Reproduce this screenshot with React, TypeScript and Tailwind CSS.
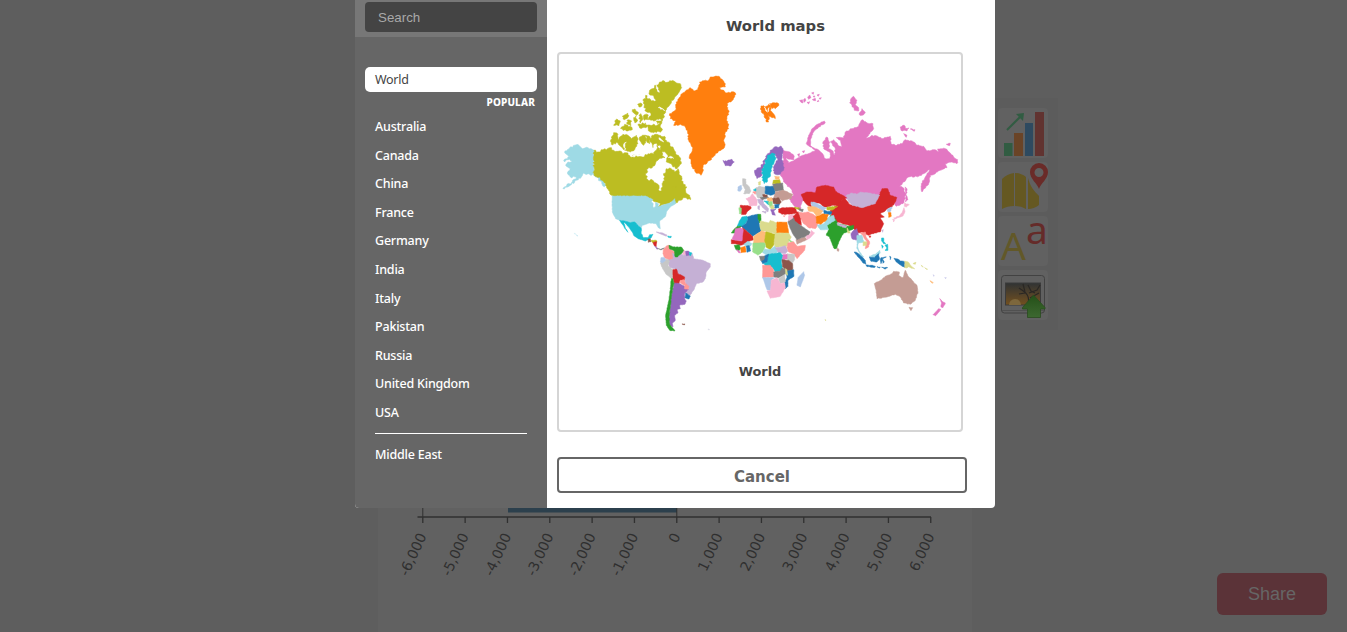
import React from "react";

type Shape = [color: string, points: string];

/** Adds small, repeatable coastline detail to a coarse outline. */
function coast(points: string, amount = 3): string {
  const p = points.trim().split(/\s+/).map((s) => s.split(",").map(Number));
  let seed = p.length * 97 + p[0][0];
  const rnd = () => {
    seed = (seed * 9301 + 49297) % 233280;
    return seed / 233280 - 0.5;
  };
  const out: string[] = [];
  p.forEach(([x, y], i) => {
    const [nx, ny] = p[(i + 1) % p.length];
    const d = Math.hypot(nx - x, ny - y) || 1;
    const steps = Math.max(1, Math.floor(d / 4));
    out.push(`${x},${y}`);
    for (let k = 1; k < steps; k++) {
      const t = k / steps;
      const o = rnd() * amount * 2;
      out.push(`${(x + (nx - x) * t - ((ny - y) / d) * o).toFixed(1)},${(y + (ny - y) * t + ((nx - x) / d) * o).toFixed(1)}`);
    }
  });
  return out.join(" ");
}

function Region({ x, y, shapes, rough = 0.8 }: { x: number; y: number; shapes: Shape[]; rough?: number }) {
  return (
    <g transform={`translate(${x} ${y}) scale(0.33333)`}>
      {shapes.map(([c, p], i) => (
        <polygon key={i} fill={c} stroke={c} strokeWidth="1.6" points={coast(p, rough)} />
      ))}
    </g>
  );
}

const O = "#bcbd22";
const northAmerica: Shape[] = [
  ["#9edae5", "25,277 40,262 60,253 75,262 95,262 113,270 113,345 100,342 82,338 75,350 55,365 20,385 48,364 60,350 42,350 33,338 42,325 28,315 35,305 48,302 40,297 25,305 22,300 40,290"],
  ["#9edae5", "113,342 130,348 140,362 149,375 144,379 132,362 118,350"],
  [O, "113,270 125,275 135,268 150,268 160,262 172,270 190,272 200,280 215,278 222,290 240,285 262,290 275,280 292,282 300,270 302,255 309,270 325,264 315,285 305,300 290,318 275,325 268,345 275,358 292,362 305,372 310,392 316,392 318,375 325,360 322,345 330,325 345,325 355,335 365,325 372,345 380,368 392,380 388,392 400,405 403,418 385,412 370,420 355,430 352,422 340,428 325,432 305,440 312,428 300,425 282,415 268,410 172,410 160,400 148,375 130,350 113,345"],
  [O, "285,228 300,222 325,228 332,245 350,260 358,275 372,292 375,305 362,325 350,320 345,310 330,305 335,285 318,270 310,255 295,250 290,262 282,245"],
  [O, "165,230 172,217 185,222 185,238 200,222 215,225 225,235 240,225 245,250 235,268 222,275 205,270 195,260 185,248 165,252"],
  [O, "250,230 268,225 270,240 262,255 254,245"],
  [O, "268,225 282,232 280,250 272,246"],
  [O, "296,272 306,280 314,276 318,286 326,292 316,294 300,288"],
  [O, "280,90 300,75 315,65 345,62 372,70 376,82 365,100 350,120 335,140 325,160 318,180 302,176 292,182 276,178 284,160 270,154 260,128 268,105 285,122 300,120 290,105 278,100"],
  [O, "172,195 182,176 192,182 188,196"],
  [O, "193,205 205,192 222,198 228,208 210,212"],
  [O, "198,168 214,158 218,166 205,178"],
  [O, "212,180 226,182 224,196 214,192"],
  [O, "232,172 240,165 242,184 236,188"],
  [O, "248,165 254,160 260,176 252,188"],
  [O, "245,192 268,188 272,200 250,203"],
  [O, "272,195 314,192 316,212 284,216 276,206"],
  [O, "228,148 236,146 246,156 240,164 232,158"],
  [O, "244,132 254,128 256,138 248,140"],
  [O, "262,165 276,164 274,178 264,180"],
  [O, "300,182 320,178 316,190 304,190"],
  [O, "350,378 362,380 360,388 350,386"],
  ["#fff", "300,75 303,88 309,96 305,88"],
  ["#fff", "325,152 310,140 306,142"],
  ["#fff", "205,270 202,252 210,246 206,256"],
  ["#fff", "225,288 245,280 262,284 244,288"],
  ["#fff", "322,245 312,240 308,232 316,238"],
  ["#fff", "352,294 342,288 336,292 344,294"],
];
const arctic: Shape[] = [
  ["#ff7f0e", "28,160 45,150 48,125 65,100 90,82 100,92 112,88 118,65 145,60 150,50 175,48 190,62 195,80 178,82 200,98 210,98 222,95 227,102 212,125 200,130 205,150 200,175 205,205 195,215 192,235 192,262 165,280 150,300 132,312 122,345 105,335 92,310 88,285 98,262 85,240 82,215 75,200 60,192 40,195 48,182 30,175"],
  ["#9467bd", "188,300 200,303 215,297 222,305 212,317 195,316"],
  ["#ff7f0e", "302,137 318,138 325,132 335,135 330,150 343,165 345,175 335,172 325,165 325,185 318,185 312,165 303,155"],
  ["#ff7f0e", "328,130 350,127 356,135 345,145 332,140"],
  ["#fff", "312,140 319,154 320,150"],
  ["#fff", "326,142 322,156 325,152"],
  ["#9467bd", "283,330 300,322 312,300 322,280 340,262 362,257 368,270 365,290 370,330 360,342 345,342 338,330 345,310 352,300 345,280 330,285 318,300 308,325 305,345 290,355 285,345"],
  ["#17becf", "306,325 315,305 322,285 335,278 345,282 345,298 335,315 330,340 322,362 312,370 306,360"],
];
const P = "#e377c2";
const russia: Shape[] = [
  [P, "-25,208 0,216 12,228 10,239 -8,236 -15,228 -5,247 10,242 30,228 45,222 60,218 75,212 65,202 80,206 95,218 105,235 118,235 120,218 100,205 98,185 110,170 118,185 115,205 125,210 134,225 134,202 120,185 130,178 143,195 155,200 150,180 138,172 160,172 165,155 185,145 205,138 215,118 230,128 248,130 250,145 235,163 228,174 245,165 262,168 275,175 300,168 302,190 315,195 335,190 345,178 370,185 380,195 400,198 410,212 430,208 445,215 442,206 465,205 480,218 490,230 502,238 500,250 485,245 465,250 470,262 450,270 435,280 420,285 415,310 395,335 393,310 405,290 418,268 400,280 385,288 355,290 328,318 342,325 345,355 338,370 318,378 300,352 260,360 170,355 90,340 35,352 45,357 35,365 30,387 10,375 -2,358 10,345 5,330 -20,305 -30,280 -33,265 -20,240"],
  [P, "48,190 55,165 65,145 85,130 102,122 105,128 85,140 70,155 62,175 60,195 68,202 60,200"],
  [P, "182,55 190,48 200,60 195,72 205,82 205,92 192,90 185,75 178,68"],
  [P, "210,95 215,85 225,98 215,105 207,103"],
  [P, "330,140 342,135 345,144 356,143 350,152 332,150"],
  [P, "360,146 374,148 372,153"],
  [P, "340,160 350,165 348,171"],
  [P, "468,192 480,189 478,196"],
  [P, "344,320 350,325 348,345 353,358 346,365"],
  [P, "28,60 36,58 38,68 32,66"],
  [P, "40,58 44,54 46,62 41,66"],
  [P, "52,50 58,44 62,52 55,57"],
  [P, "64,38 70,36 69,42"],
  [P, "66,58 75,54 76,61"],
  [P, "80,64 84,60 86,63"],
  [P, "80,44 87,42 84,48"],
  [P, "86,54 93,52 90,57"],
  [P, "50,66 58,64 55,71"],
  [P, "68,48 74,47 72,51"],
  [P, "22,222 28,220 27,230"],
  [P, "36,213 43,211 40,218"],
];
const southAmerica: Shape[] = [
  ["#9edae5", "168,47 268,47 290,58 285,64 291,70 290,82 297,80 298,66 306,70 305,80 318,75 330,71 345,66 355,55 358,70 342,80 332,92 328,108 310,122 312,145 306,142 300,130 280,128 258,135 255,145 245,135 235,125 222,127 205,122 190,120 178,115 168,95 167,65"],
  ["#17becf", "190,120 205,122 222,127 235,125 245,135 255,145 255,160 262,172 275,172 280,163 290,162 285,172 277,178 268,182 245,175 232,165 228,155 215,138 203,126 207,142 215,156 205,144 198,132"],
  ["#8c564b", "275,177 282,175 284,184 276,186"],
  [O, "284,181 300,180 302,185 290,188"],
  ["#d62728", "290,187 301,184 300,199 294,196"],
  ["#9467bd", "295,197 305,205 302,207"],
  ["#7f7f7f", "303,204 313,207 325,203 314,209"],
  ["#c5b0d5", "300,155 315,157 332,164 330,168 315,162"],
  ["#17becf", "334,167 345,168 344,172 336,171"],
  ["#ff9896", "322,207 330,197 338,195 340,205 355,215 352,235 340,240 325,232 320,220"],
  ["#f7b6d2", "380,207 388,213 388,228 378,222"],
  ["#c5b0d5", "335,240 352,235 348,218 362,228 375,220 380,225 400,226 408,220 412,235 440,240 462,250 462,260 450,275 447,295 440,305 420,310 412,330 400,347 388,338 398,325 388,310 385,290 365,280 355,265 340,262"],
  ["#2ca02c", "338,195 350,200 375,200 382,210 375,220 366,226 364,230 357,230 355,225 354,212 340,206"],
  ["#9467bd", "388,213 398,213 400,225 390,226"],
  ["#17becf", "399,215 407,218 403,226 399,224"],
  ["#c7c7c7", "312,248 322,240 332,236 340,242 335,255 345,265 350,268 350,290 345,295 328,280 318,262"],
  ["#aec7e8", "314,232 325,232 328,240 318,248 312,244"],
  ["#d62728", "350,268 360,266 365,280 385,290 384,300 372,300 368,310 355,312 350,295"],
  ["#9467bd", "355,308 370,310 385,318 387,326 397,326 385,340 385,355 390,362 386,372 370,374 372,385 362,388 365,398 355,405 357,420 348,430 350,440 340,435 338,415 342,380 345,345 350,325"],
  ["#ff9896", "372,300 384,298 388,310 398,318 396,327 384,325 385,315 372,308"],
  ["#1f77b4", "388,338 402,347 398,356 386,352"],
  ["#2ca02c", "345,295 350,295 353,310 348,330 345,350 342,380 338,410 340,432 350,444 356,452 340,450 330,435 328,405 334,375 340,345 343,320"],
  ["#8c564b", "377,431 386,431 384,434"],
  ["#c7e9f1", "54,159 58,161 56,162"],
  ["#c7e9f1", "60,163 65,167 62,167"],
  ["#d9d9e6", "455,446 460,448 457,449"],
];
const europe: Shape[] = [
  ["#d62728", "45,195 75,197 78,203 65,215 62,222 48,222"],
  ["#98df8a", "41,202 48,203 48,220 42,220"],
  ["#f7b6d2", "62,175 75,170 82,160 95,178 95,195 72,197 70,185"],
  ["#c7c7c7", "52,115 62,117 62,130 72,140 77,152 72,160 55,160 60,148 52,135"],
  ["#aec7e8", "38,140 48,135 50,145 45,153 38,152"],
  ["#c7c7c7", "92,142 104,138 120,142 120,160 110,172 98,173 92,160"],
  ["#17becf", "84,149 92,145 91,154"],
  ["#ff9896", "82,155 92,154 90,162"],
  ["#dbdb8d", "99,126 106,123 105,134 100,134"],
  ["#1f77b4", "120,138 148,138 150,160 135,165 120,160"],
  ["#bcbd22", "144,120 163,118 166,132 142,130"],
  ["#ffbb78", "148,108 162,109 162,118 150,116"],
  ["#7f7f7f", "142,132 172,128 175,150 150,153"],
  ["#c49c94", "150,155 175,150 202,162 198,175 180,178 172,182 160,172 145,172"],
  ["#8c564b", "140,175 160,172 168,185 160,193 145,190"],
  ["#1f77b4", "148,193 162,192 160,203 148,203"],
  ["#c5b0d5", "96,178 112,176 115,190 130,205 128,215 118,207 102,190"],
  ["#c5b0d5", "110,214 123,213 121,219"],
  ["#c5b0d5", "98,197 103,196 103,208 98,206"],
  ["#7f7f7f", "104,172 125,166 130,172 112,178"],
  ["#8c564b", "112,163 126,164 124,170 114,169"],
  ["#ffbb78", "125,173 140,172 142,182 128,184"],
  ["#17becf", "116,182 130,184 134,194 126,191"],
  ["#98df8a", "128,186 140,184 142,196 134,200"],
  ["#dbdb8d", "134,200 145,195 147,205 138,208"],
  ["#9467bd", "136,208 152,206 145,212 150,225 142,224"],
  ["#d62728", "160,206 175,202 210,202 216,217 200,221 170,222 160,216"],
  ["#bcbd22", "208,200 222,202 222,208 210,205"],
  ["#7f7f7f", "220,205 234,207 232,214 222,210"],
  ["#ff9896", "174,227 180,226 177,229"],
];
const africa: Shape[] = [
  ["#17becf", "50,50 65,48 68,58 60,70 48,78 36,78 42,62"],
  ["#2ca02c", "36,78 48,78 42,85 28,98 18,98 25,88"],
  ["#1f77b4", "66,50 80,45 98,42 100,60 105,85 108,92 82,108 48,78 62,70 68,58"],
  ["#2ca02c", "98,42 106,42 107,60 103,68 98,55"],
  ["#dbdb8d", "105,62 130,68 135,60 155,68 154,98 150,100 122,92 108,92 104,80"],
  ["#ff7f0e", "155,65 185,66 190,98 154,98"],
  ["#d62728", "52,82 82,108 85,118 65,125 58,132 45,135 30,130 18,130 18,118 50,122"],
  ["#e377c2", "28,98 30,85 46,82 54,88 50,122 30,120 20,117"],
  ["#ffbb78", "85,108 108,92 122,95 120,115 118,128 85,128"],
  [O, "122,94 150,102 148,130 135,148 122,140 118,120"],
  ["#dbdb8d", "150,98 190,98 198,110 190,125 185,138 150,140 146,128"],
  ["#98df8a", "83,128 118,128 120,138 112,155 98,165 82,155"],
  ["#2ca02c", "27,135 42,133 46,145 40,152 32,148"],
  ["#e377c2", "34,148 42,152 46,158 40,157"],
  ["#ff7f0e", "46,142 60,138 62,155 48,157"],
  ["#9edae5", "55,132 68,123 80,130 76,137 62,138"],
  ["#1f77b4", "63,137 72,136 76,152 65,156"],
  ["#9edae5", "118,146 135,148 148,138 158,152 150,160 122,164 112,157"],
  ["#c5b0d5", "150,142 168,140 180,136 188,152 180,160 160,158"],
  ["#98df8a", "190,118 202,124 205,128 194,124"],
  ["#ff9896", "188,128 205,124 215,138 240,135 238,150 215,175 205,160 190,155 185,142"],
  ["#c7c7c7", "185,160 208,162 208,178 200,190 185,175"],
  ["#e377c2", "172,163 185,162 185,176 170,178"],
  ["#17becf", "128,162 165,157 172,165 168,185 172,210 150,215 140,200 125,200 115,190 125,185"],
  ["#1f77b4", "116,168 130,162 125,185 112,190 108,182"],
  ["#7f7f7f", "102,168 118,168 116,178 107,182"],
  ["#8c564b", "170,178 190,180 202,190 202,208 185,212 172,200"],
  ["#ff9896", "112,195 135,195 145,208 145,230 112,232"],
  ["#7f7f7f", "145,215 165,212 170,203 185,208 180,222 160,232 146,230"],
  ["#1f77b4", "183,213 205,208 206,228 188,240 188,258 180,265 178,245 185,232"],
  ["#dbdb8d", "180,205 185,208 187,225 181,220"],
  ["#c7c7c7", "160,235 178,222 180,245 165,250"],
  ["#aec7e8", "112,232 148,232 138,240 136,270 125,268"],
  ["#f7b6d2", "138,240 155,232 165,250 178,248 180,262 165,288 135,294 125,272 136,270"],
  ["#aec7e8", "235,214 238,225 225,260 215,255 218,232"],
  ["#c49c94", "212,118 238,110 245,118 215,132"],
  ["#7f7f7f", "188,65 196,46 205,48 225,75 240,85 255,95 250,105 215,118 205,105 195,85"],
  ["#f7b6d2", "258,90 268,98 255,112 245,118 242,108 255,102"],
  ["#f7b6d2", "190,46 205,42 202,54 190,62"],
  ["#d62728", "204,48 218,34 226,55 228,75 210,62"],
];
const asia: Shape[] = [
  ["#ff9896", "-5,125 8,128 25,125 48,138 52,165 45,175 25,172 10,160 2,145"],
  ["#d62728", "3,72 20,65 45,67 50,50 75,45 100,50 105,62 120,72 140,82 125,90 115,105 95,105 80,110 70,110 60,100 40,95 30,100 35,112 22,105 10,92"],
  ["#d62728", "132,82 140,92 150,103 185,110 220,98 232,85 245,55 262,55 270,75 290,82 285,95 275,110 262,115 250,125 240,130 252,140 240,142 250,160 240,185 215,190 205,195 185,185 170,190 160,175 145,165 110,155 95,140 90,120 112,102"],
  ["#c5b0d5", "138,75 155,68 170,72 180,65 205,68 238,75 233,85 225,100 185,112 155,105 143,92"],
  ["#2ca02c", "90,135 105,145 112,160 145,168 160,165 160,175 150,180 140,185 130,188 120,205 108,235 102,235 92,212 88,200 78,195 85,175 80,165"],
  ["#c5b0d5", "110,158 140,168 135,173 112,165"],
  ["#dbdb8d", "140,172 150,188 142,188"],
  ["#9467bd", "160,180 170,175 175,195 168,210 155,205 152,190"],
  ["#9edae5", "170,195 185,195 190,215 175,217 172,228 178,245 190,260 182,258 170,235"],
  ["#ff9896", "180,188 195,185 197,200 208,215 205,230 195,235 200,215 190,200"],
  ["#dbdb8d", "188,215 200,215 198,226 188,226"],
  ["#9edae5", "85,140 100,135 105,150 80,165 85,178 60,178 50,165 70,160"],
  ["#ff7f0e", "48,138 70,130 85,132 78,150 60,162 48,158"],
  ["#1f77b4", "70,120 95,125 92,132 72,130"],
  [O, "80,110 112,108 95,120 80,118"],
  ["#aec7e8", "32,95 45,97 65,108 78,112 68,122 50,112 35,108"],
  ["#ffbb78", "22,110 35,108 50,112 68,122 62,132 48,138 40,125 25,122"],
  ["#c49c94", "111,233 116,237 115,243 111,242"],
  ["#aec7e8", "260,118 275,110 272,122 264,126"],
  ["#ff7f0e", "264,127 272,127 273,138 265,141"],
  ["#f7b6d2", "313,97 318,101 327,103 318,110 312,108"],
  ["#f7b6d2", "311,112 314,124 308,137 297,141 284,146 280,143 295,138 306,126"],
  ["#f7b6d2", "277,147 283,148 280,155"],
  ["#c5b0d5", "245,180 249,178 247,186"],
  ["#d62728", "206,197 212,197 209,202"],
  ["#17becf", "244,203 250,203 250,214 256,220 250,220 244,212"],
  ["#17becf", "254,224 262,222 263,240 254,240 260,233"],
  ["#17becf", "244,224 249,228 246,234"],
  ["#1f77b4", "162,245 172,248 195,270 197,282 188,278"],
  ["#1f77b4", "197,284 212,285 225,288 224,291 200,289"],
  ["#9edae5", "207,258 225,252 238,240 240,248 225,262"],
  ["#1f77b4", "207,260 222,262 235,250 238,265 230,275 212,273"],
  ["#1f77b4", "242,262 258,260 246,265 252,275 248,279 246,270 242,280 240,270"],
  ["#1f77b4", "230,289 240,291 238,293"],
  ["#1f77b4", "244,291 262,292 255,296"],
  ["#1f77b4", "268,258 272,260 270,268"],
  ["#1f77b4", "281,264 292,266 300,272 313,274 313,291 302,285 288,275"],
  ["#dbdb8d", "313,272 326,277 332,286 343,296 334,294 325,289 320,293 313,292"],
  ["#dbdb8d", "338,280 347,276 345,282"],
  ["#c49c94", "222,340 245,328 255,318 275,310 280,303 297,305 295,315 308,322 315,300 322,315 335,330 350,345 353,365 345,390 330,402 310,398 300,380 285,372 260,380 230,385 228,362"],
  ["#c49c94", "326,411 337,412 332,421"],
  [P, "418,385 425,393 435,398 428,412 422,410 424,398"],
  [P, "398,433 415,415 422,418 405,437"],
  ["#ffbb78", "389,331 399,337 396,339"],
  ["#dbdb8d", "362,285 369,290 366,289"],
  ["#dbdb8d", "373,292 382,297 378,297"],
  ["#c7c7e8", "433,322 438,322 436,325"],
  ["#c7c7e8", "399,313 402,317 400,318"],
  ["#dbdb8d", "74,448 77,449 76,451"],
];

function WorldMap() {
  return (
    <svg className="block h-[290px] w-[402px]" viewBox="559 54 402 290">
      <Region x={556.3} y={60.3} shapes={northAmerica} rough={3.2} />
      <Region x={790.3} y={80.3} shapes={russia} rough={1.8} />
      <Region x={660.3} y={60.3} shapes={arctic} rough={2.8} />
      <Region x={556.3} y={180.3} shapes={southAmerica} />
      <Region x={800.3} y={170.3} shapes={asia} rough={1} />
      <Region x={725.3} y={200.3} shapes={africa} rough={0.5} />
      <Region x={725.3} y={140.3} shapes={europe} />
    </svg>
  );
}

const ticks = ["-6,000", "-5,000", "-4,000", "-3,000", "-2,000", "-1,000", "0", "1,000", "2,000", "3,000", "4,000", "5,000", "6,000"];

function ChartAxis() {
  return (
    <svg className="block h-[134px] w-[594px]" viewBox="378 498 594 134">
      <rect x="508" y="498" width="169" height="14.5" fill="#2c404d" />
      <path d="M422.8 498V517M676.8 498V517" stroke="#303030" strokeWidth="1" />
      <path d="M417.500 517H931" stroke="#303030" strokeWidth="1.7" />
      {ticks.map((label, i) => {
        const x = 422.8 + i * 42.33;
        return (
          <g key={label}>
            <path d={`M${x} 517V523`} stroke="#303030" strokeWidth="1.3" />
            <text
              x={x + 4}
              y="536"
              transform={`rotate(-65 ${x + 4} 536)`}
              textAnchor="end"
              fontSize="14"
              fontFamily="DejaVu Sans, sans-serif"
              fill="#2f2f2f"
            >
              {label}
            </text>
          </g>
        );
      })}
    </svg>
  );
}

function ChartIcon() {
  return (
    <svg className="size-[50px]" viewBox="0 0 50 50">
      <path d="M6 35h8.500v13H6z" fill="#315c42" />
      <path d="M16 25h9v23h-9z" fill="#6a4427" />
      <path d="M27 15h8v33h-8z" fill="#2e4a60" />
      <path d="M37 4h9v44h-9z" fill="#613330" />
      <path d="M9 22 23 8" stroke="#315c42" strokeWidth="2" />
      <path d="m18 6 8-1-1 8z" fill="#315c42" />
    </svg>
  );
}

function MapIcon() {
  return (
    <svg className="size-[50px]" viewBox="0 0 50 50">
      <path d="M4 17q5-5 12-6v33q-7 0-12 3zM17 11q6 0 11 4v32q-5-3-11-3zM30 16c2 8 6 13 11 18v9q-5 4-11 4z" fill="#655822" />
      <path fillRule="evenodd" d="M41 27c-2-6-9-10-9-17a9 9 0 0 1 18 0c0 7-7 11-9 17zM41 6a4.500 4.500 0 1 0 0 9 4.500 4.500 0 0 0 0-9z" fill="#6a2b28" />
    </svg>
  );
}

function TextIcon() {
  return (
    <span className="flex h-[50px] w-[50px] items-end pl-[3px] font-['Noto_Sans',sans-serif] text-[39px] leading-[50px]">
      <span className="translate-y-1 text-[#625828]">A</span>
      <span className="-translate-y-3 text-[#652b29]">a</span>
    </span>
  );
}

function PhotoIcon() {
  return (
    <svg className="size-[50px]" viewBox="0 0 50 50">
      <defs>
        <linearGradient id="dusk" x2="0" y2="1">
          <stop stopColor="#303334" />
          <stop offset="1" stopColor="#73501f" />
        </linearGradient>
        <linearGradient id="leaf" x2="0" y2="1">
          <stop stopColor="#245018" />
          <stop offset="1" stopColor="#3d6830" />
        </linearGradient>
      </defs>
      <rect x="3.500" y="5.500" width="43" height="37.500" rx="3" fill="#606060" stroke="#424242" />
      <path d="M4 40.500h42" stroke="#505050" />
      <rect x="7.500" y="13" width="35" height="22" fill="url(#dusk)" stroke="#3b3b3b" />
      <path d="M11 35a6 6 0 0 1 12 0z" fill="#7d673c" />
      <path d="M30 35c2-9-1-12-9-17m6 5-6 1m10-1 8-3 3-5m-12 0 3 6 4 2M25 14l2 8m5 6 9-5" fill="none" stroke="#2a2724" strokeWidth="1.200" />
      <path d="M35.500 25 47 37.500V39h-4.500v8.500h-13V39H24.500v-1.500z" fill="url(#leaf)" stroke="#2a4b20" strokeWidth=".8" />
    </svg>
  );
}

const popular = ["Australia", "Canada", "China", "France", "Germany", "India", "Italy", "Pakistan", "Russia", "United Kingdom", "USA"];

function Sidebar() {
  return (
    <aside className="flex h-[508px] w-48 flex-col overflow-hidden rounded-bl bg-[#666]">
      <div className="h-[37px] bg-[#777] px-2.5 pt-0.5">
        <input
          className="block h-[30px] w-[172px] rounded bg-[#444] px-[13px] font-['Liberation_Sans',sans-serif] text-[13.33px] text-white outline-none placeholder:text-[#a9a9a9]"
          placeholder="Search"
        />
      </div>
      <nav className="flex flex-col px-2.5 pt-[30px] font-['Noto_Sans',sans-serif] text-[12.5px] font-medium tracking-[-0.2px] text-white">
        <div className="h-[25px] rounded-[5px] bg-white pl-2.5 text-[12.5px] leading-[25px] font-normal tracking-[-0.3px] text-[#444]">World</div>
        <div className="h-[20px] pr-0.5 text-right text-[10px] leading-[21px] font-extrabold tracking-[0.15px]">POPULAR</div>
        {popular.map((name) => (
          <div key={name} className="h-[28.6px] pl-2.5 leading-[29px]">{name}</div>
        ))}
        <hr className="mx-2.5 mt-[6px] border-white" />
        <div className="mt-[6px] h-[29px] pl-2.5 leading-[29px]">Middle East</div>
      </nav>
    </aside>
  );
}

export default function App() {
  return (
    <div className="relative h-[632px] w-full overflow-hidden bg-[#5e5e5e]">
      <main className="flex h-full pl-[378px]">
        <section className="flex w-[594px] flex-col justify-end bg-[#616161]">
          <ChartAxis />
        </section>
        <aside className="mt-[98px] ml-4 flex h-[232px] w-[70px] flex-col gap-1 bg-[#5c5c5c] pt-2.5 pl-2.5">
          {[ChartIcon, MapIcon, TextIcon, PhotoIcon].map((Icon, i) => (
            <button key={i} className="size-[50px] rounded bg-[#616161]">
              <Icon />
            </button>
          ))}
        </aside>
      </main>

      <button className="absolute right-5 bottom-[17px] h-[42px] w-[110px] rounded-md bg-[#5b3338] font-['Liberation_Sans',sans-serif] text-[18px] text-[#666]">
        Share
      </button>

      <div className="absolute top-0 left-[355px] flex h-[508px] w-[640px] rounded-b bg-white">
        <Sidebar />
        <section className="flex flex-1 flex-col pl-2.5 font-['DejaVu_Sans',sans-serif] font-bold text-[#444]">
          <h2 className="h-[52px] w-[437px] text-center text-[14.8px] leading-[51px]">World maps</h2>
          <div className="h-[380px] w-[406px] rounded border-2 border-[#d5d5d5]">
            <WorldMap />
            <div className="mt-[18px] text-center text-[12.9px] leading-5">World</div>
          </div>
          <button className="mt-[25px] h-9 w-[410px] rounded border-2 border-[#666] pt-0.5 text-[15px] leading-[32px] text-[#666]">Cancel</button>
        </section>
      </div>
    </div>
  );
}
